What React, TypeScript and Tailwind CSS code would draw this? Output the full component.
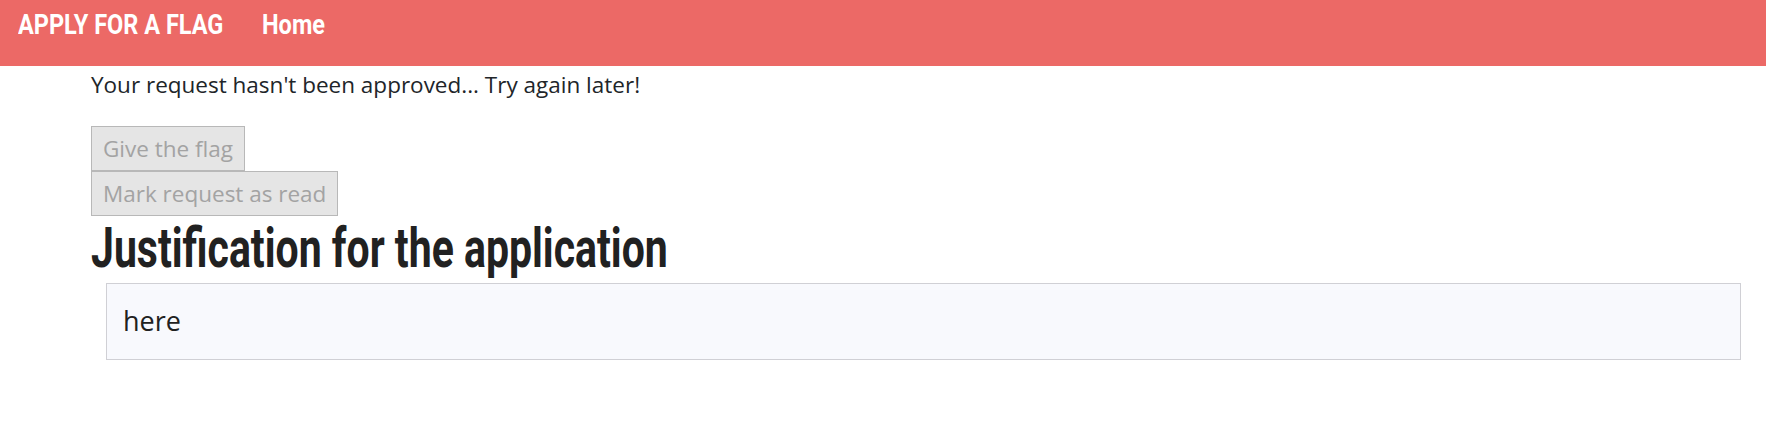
export default function App() {
  const cond = { fontFamily: 'Roboto, "Liberation Sans", sans-serif' };
  return (
    <div className="min-h-[445px] bg-white" style={{ fontFamily: '"Open Sans", "Noto Sans", sans-serif' }}>
      <nav className="flex h-[66px] items-start bg-[#ec6966] pl-[18px] pt-[11px]">
        <span className="inline-block w-[206px] origin-left scale-x-[0.84] whitespace-nowrap text-[28px] font-bold leading-[28px] text-white" style={cond}>APPLY FOR A FLAG</span>
        <span className="ml-[38px] inline-block origin-left scale-x-[0.84] whitespace-nowrap text-[28px] font-bold leading-[28px] text-white" style={cond}>Home</span>
      </nav>
      <div className="pl-[91px] pr-[25px]">
        <p className="mt-[4px] text-[22.5px] leading-[30px] text-[#212529]">Your request hasn't been approved... Try again later!</p>
        <div className="mt-[26px] flex flex-col items-start">
          <button disabled className="h-[45px] border border-[#b8b8b8] bg-[#e5e5e5] px-[11px] text-[22.5px] text-[#a3a3a3]">Give the flag</button>
          <button disabled className="h-[45px] border border-[#b8b8b8] bg-[#e5e5e5] px-[11px] text-[22.5px] text-[#a3a3a3]">Mark request as read</button>
        </div>
        <h1 className="mt-[5px] h-[55px] whitespace-nowrap">
          <span className="inline-block origin-left scale-x-[0.745] text-[55px] font-bold leading-[55px] text-[#212121]" style={cond}>Justification for the application</span>
        </h1>
        <div className="ml-[15px] mt-[7px] flex h-[77px] items-center border border-[#d0d0d5] bg-[#f8f9fd] px-[16px] text-[27px] text-[#212121]">here</div>
      </div>
    </div>
  );
}
